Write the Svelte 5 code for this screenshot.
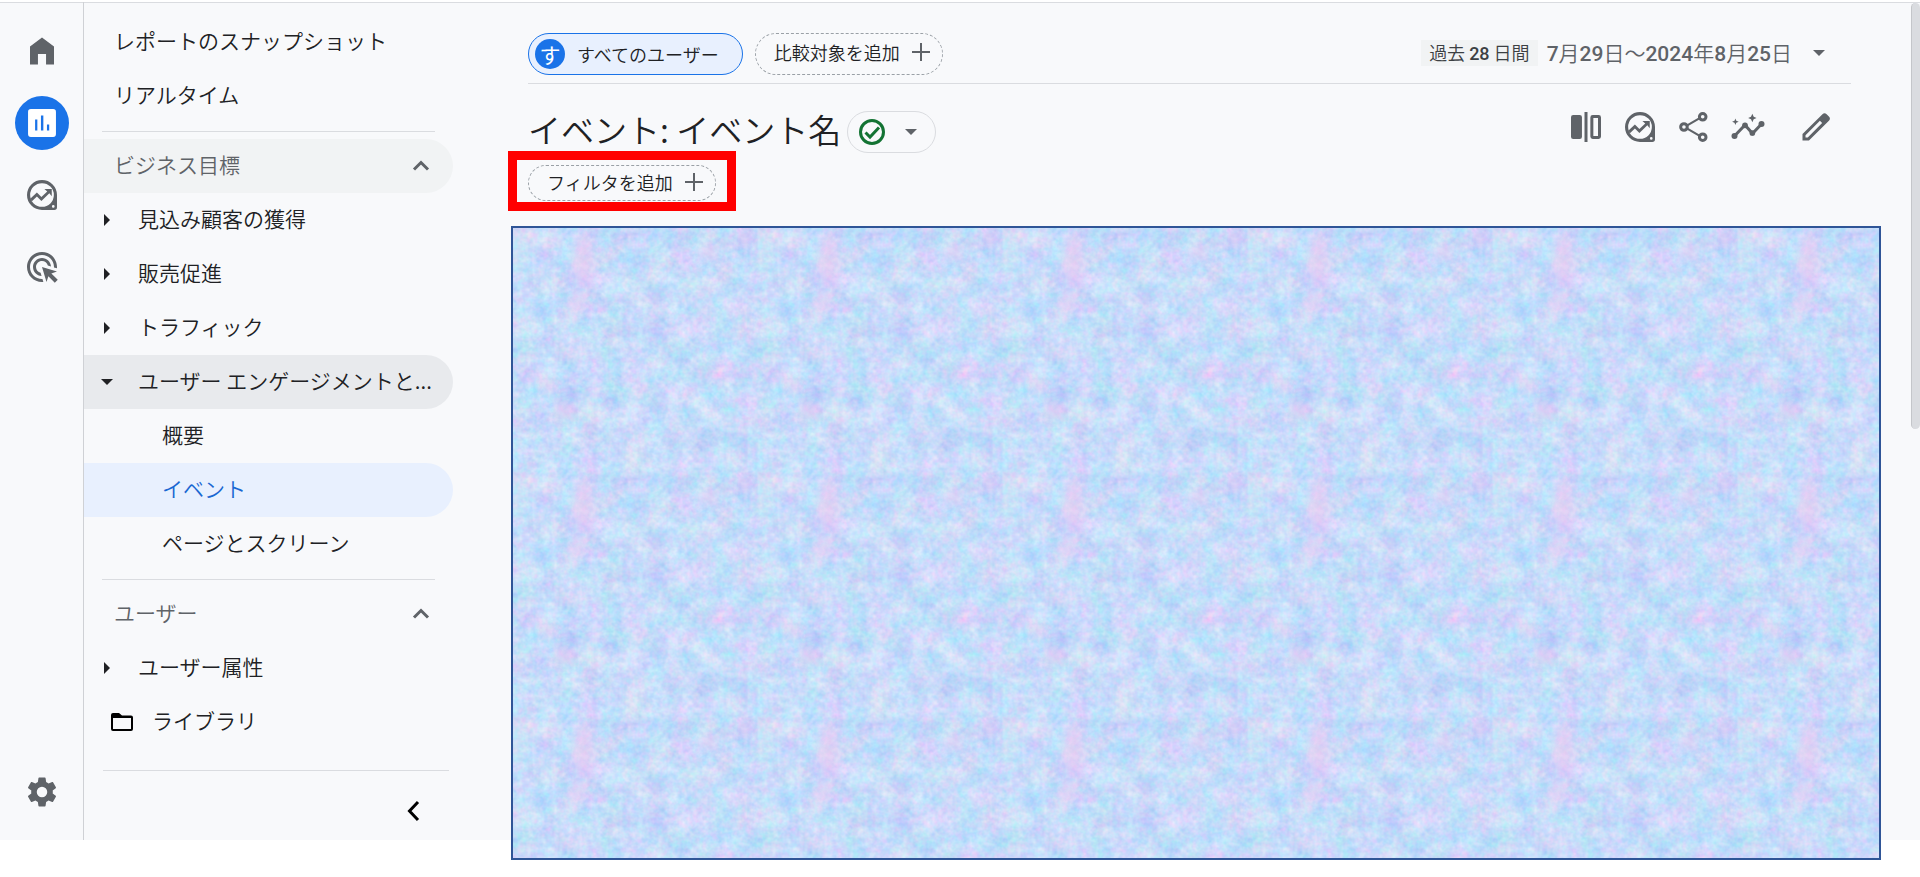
<script>
	const explorePath =
		'M12 2a10 10 0 1 0 0 20h8.2a1.8 1.8 0 0 0 1.8-1.8V12A10 10 0 0 0 12 2zm0 2.1a7.9 7.9 0 1 1 0 15.8 7.9 7.9 0 0 1 0-15.8zm7.5 14.6a.9.9 0 1 1 0 1.8.9.9 0 0 1 0-1.8zM13.6 8l1.9 1.6-3.9 3.7-3-3-4.1 3.9.6 2.2 3.5-3.4 3 3 5.3-5.1 1.6 1.9V8z';

	const rail = [
		{
			label: 'ホーム',
			path: 'M4 21V9l8-6 8 6v12h-5.3v-7H9.3v7z'
		},
		{
			label: 'レポート',
			active: true,
			path: 'M4.600 2.700h14.800a1.900 1.900 0 0 1 1.900 1.900v14.800a1.900 1.900 0 0 1-1.900 1.900H4.600a1.900 1.900 0 0 1-1.900-1.900V4.600a1.900 1.900 0 0 1 1.900-1.900zM7.400 9.700V17h1.500V9.700zM11.300 7v10h1.600V7zM15.300 13v4h1.500v-4z'
		},
		{ label: '探索', path: explorePath },
		{
			label: '広告',
			path: 'M11.710 17.990C8.530 17.840 6 15.220 6 12c0-3.310 2.690-6 6-6 3.220 0 5.840 2.530 5.990 5.710l-2.100-.630C15.480 9.310 13.890 8 12 8c-2.210 0-4 1.790-4 4 0 1.890 1.310 3.480 3.080 3.890zM22 12c0 .300-.010.600-.040.900l-1.970-.590c.010-.100.010-.210.010-.310 0-4.420-3.580-8-8-8s-8 3.580-8 8 3.580 8 8 8c.100 0 .210 0 .310-.010l.590 1.970c-.300.030-.600.040-.900.040C6.480 22 2 17.520 2 12S6.480 2 12 2s10 4.480 10 10zm-3.770 4.260L22 15l-10-3 3 10 1.260-3.770 4.270 4.270 1.980-1.980z'
		}
	];

	const gearPath =
		'M19.140 12.940c.040-.300.060-.610.060-.940 0-.320-.020-.640-.070-.940l2.030-1.580c.180-.140.230-.410.120-.610l-1.920-3.320c-.120-.220-.370-.290-.590-.220l-2.390.960c-.500-.380-1.030-.700-1.620-.940l-.360-2.540c-.040-.240-.240-.410-.480-.410h-3.840c-.240 0-.430.170-.470.410l-.360 2.540c-.590.240-1.130.570-1.620.940l-2.390-.960c-.220-.080-.470 0-.590.220L2.740 8.870c-.120.210-.080.470.120.610l2.030 1.580c-.050.300-.090.630-.090.940s.020.640.070.940l-2.030 1.580c-.180.140-.230.410-.120.610l1.920 3.320c.120.220.370.290.590.220l2.390-.960c.500.380 1.030.700 1.620.940l.360 2.540c.050.240.240.410.480.410h3.840c.240 0 .440-.170.470-.410l.360-2.540c.590-.240 1.130-.560 1.620-.940l2.390.960c.220.080.470 0 .590-.220l1.920-3.320c.120-.220.070-.470-.120-.610zM12 15.500a3.500 3.500 0 1 1 0-7 3.500 3.500 0 0 1 0 7z';

	const groups = [
		{
			title: 'ビジネス目標',
			hover: true,
			items: [
				{ text: '見込み顧客の獲得' },
				{ text: '販売促進' },
				{ text: 'トラフィック' },
				{
					text: 'ユーザー エンゲージメントと...',
					open: true,
					children: [
						{ text: '概要' },
						{ text: 'イベント', active: true },
						{ text: 'ページとスクリーン' }
					]
				}
			]
		},
		{
			title: 'ユーザー',
			items: [{ text: 'ユーザー属性' }]
		}
	];

	// digits are set in a heavier face than the kanji around them
	const split = (str) => str.split(/(\d+)/).filter(Boolean);
	const period = split('過去 28 日間');
	const range = split('7月29日～2024年8月25日');
</script>

{#snippet mixed(parts)}{#each parts as part}{#if /\d/.test(part)}<span class="num">{part}</span>{:else}{part}{/if}{/each}{/snippet}

{#snippet plus()}
	<svg class="plus" viewBox="0 0 30 30"><path d="M15 6v18M6 15h18" /></svg>
{/snippet}

<div class="app">
	<nav class="rail" aria-label="メイン">
		{#each rail as item}
			<a href="#top" class:active={item.active} aria-label={item.label}>
				<svg class="icon" viewBox="0 0 24 24"><path fill-rule="evenodd" d={item.path} /></svg>
			</a>
		{/each}
		<a href="#admin" class="admin" aria-label="管理">
			<svg class="icon" viewBox="0 0 24 24"><path d={gearPath} /></svg>
		</a>
	</nav>

	<nav class="side" aria-label="レポート">
		<a class="row top" href="#snapshot">レポートのスナップショット</a>
		<a class="row top" href="#realtime">リアルタイム</a>

		{#each groups as group}
			<hr />
			<button class="row group" class:hover={group.hover}>
				{group.title}
				<svg class="chevron" viewBox="0 0 18 18"><path d="M2 12.500l7-7 7 7" /></svg>
			</button>
			{#each group.items as item}
				<button class="row item" class:open={item.open}>
					<svg class="caret" viewBox="0 0 12 12">
						<path d={item.open ? 'M0 3h12L6 9z' : 'M3 0v12l6-6z'} />
					</svg>
					{item.text}
				</button>
				{#each item.children ?? [] as child}
					<a class="row child" class:active={child.active} href="#report">{child.text}</a>
				{/each}
			{/each}
		{/each}

		<a class="row library" href="#library">
			<svg viewBox="0 0 24 20">
				<path
					fill-rule="evenodd"
					d="M3 1h6l3 2.500h9a2 2 0 0 1 2 2V17a2 2 0 0 1-2 2H3a2 2 0 0 1-2-2V3a2 2 0 0 1 2-2zm0 5v11h18V6z"
				/>
			</svg>
			ライブラリ
		</a>

		<div class="fold">
			<button aria-label="折りたたむ">
				<svg viewBox="0 0 24 24"><path d="M17 3l-8.500 9 8.500 9" /></svg>
			</button>
		</div>
	</nav>

	<main>
		<header>
			<button class="chip all"><span class="avatar">す</span>すべてのユーザー</button>
			<button class="chip compare">比較対象を追加{@render plus()}</button>
			<button class="date">
				<span class="period">{@render mixed(period)}</span>
				<span class="range">{@render mixed(range)}</span>
				<svg class="caret" viewBox="0 0 12 12"><path d="M0 3h12L6 9z" /></svg>
			</button>
		</header>

		<div class="title">
			<h1>イベント: イベント名</h1>
			<button class="status" aria-label="データの状態">
				<svg class="check" viewBox="0 0 30 30">
					<circle cx="15" cy="15" r="11.500" />
					<path d="M8.500 15.500l4.500 4.500 9-9.500" />
				</svg>
				<svg class="caret" viewBox="0 0 12 12"><path d="M0 3h12L6 9z" /></svg>
			</button>

			<div class="tools">
				<button aria-label="比較">
					<svg class="icon" viewBox="0 0 24 24">
						<rect x="2" y="4" width="7.300" height="16" rx="1.500" />
						<path d="M11 2h2v20h-2z" />
						<rect class="line" x="15.900" y="5" width="5.100" height="14" rx=".600" />
					</svg>
				</button>
				<button aria-label="データ探索">
					<svg class="icon" viewBox="0 0 24 24"><path fill-rule="evenodd" d={explorePath} /></svg>
				</button>
				<button aria-label="共有">
					<svg class="icon" viewBox="0 0 24 24">
						<path class="line thin" d="M7.500 10.900l8.300-4.800M7.500 13.100l8.300 4.800" />
						<circle class="line" cx="5.300" cy="12" r="2.200" />
						<circle class="line" cx="17.800" cy="5.200" r="2.200" />
						<circle class="line" cx="17.800" cy="18.800" r="2.200" />
					</svg>
				</button>
				<button aria-label="インサイト">
					<svg class="icon" viewBox="0 0 24 24">
						<path class="line" d="M3 18l7-7.300 5 5.600 6-6.300" />
						<circle cx="3" cy="18" r="2" />
						<circle cx="10" cy="10.900" r="1.900" />
						<circle cx="14.900" cy="16" r="1.900" />
						<circle cx="21" cy="10" r="2" />
						<path d="M14.900 3.200l.9 1.900 1.900.9-1.900.9-.9 1.900-.9-1.900-1.900-.9 1.900-.9z" />
						<path d="M3.600 6.300l.6 1.600 1.600.6-1.600.6-.6 1.600-.6-1.600-1.600-.6 1.600-.6z" />
					</svg>
				</button>
				<button class="edit" aria-label="編集">
					<svg class="icon" viewBox="0 0 24 24">
						<path
							fill-rule="evenodd"
							d="M3 21v-4.300L16.300 3.500a2 2 0 0 1 2.800 0l1.500 1.500a2 2 0 0 1 0 2.800L7.300 21zM5 19h1.500l9.600-9.600-1.500-1.500L5 17.500z"
						/>
					</svg>
				</button>
			</div>
		</div>

		<div class="filter">
			<button class="chip">フィルタを追加{@render plus()}</button>
			<div class="mark"></div>
		</div>

		<!-- cover over the report body -->
		<svg class="cover">
			<defs>
				<filter id="paper" filterUnits="userSpaceOnUse" x="0" y="0" width="245" height="245" color-interpolation-filters="sRGB">
					<feTurbulence type="fractalNoise" baseFrequency=".045" numOctaves="4" seed="8" stitchTiles="stitch" />
					<feColorMatrix values=".48 0 0 0 .54  0 .3 0 0 .71  0 0 .1 0 .93  0 0 0 0 1" result="wash" />
					<feTurbulence type="fractalNoise" baseFrequency=".2" numOctaves="2" seed="3" stitchTiles="stitch" />
					<feColorMatrix values=".5 0 0 0 .53  0 .3 0 0 .71  0 0 .1 0 .93  0 0 0 0 1" result="grain" />
					<feComposite in="wash" in2="grain" operator="arithmetic" k2=".6" k3=".4" />
				</filter>
				<filter id="soft" x="-50%" y="-50%" width="200%" height="200%">
					<feGaussianBlur stdDeviation="5" />
				</filter>
				<pattern id="tile" width="245" height="245" patternUnits="userSpaceOnUse">
					<rect width="245" height="245" filter="url(#paper)" />
					<g filter="url(#soft)" fill="#f5c4f2" opacity=".5">
						<ellipse cx="70" cy="33" rx="11" ry="27" />
						<circle cx="64" cy="75" r="10" />
						<circle cx="35" cy="158" r="7" />
						<circle cx="52" cy="183" r="10" />
						<circle cx="232" cy="12" r="6" />
						<circle cx="195" cy="25" r="9" />
					</g>
				</pattern>
			</defs>
			<rect width="100%" height="100%" fill="url(#tile)" />
		</svg>
	</main>

	<div class="scroll"></div>
</div>

<style>
	:global(body) {
		background: #fff;
	}

	/* the grey ground stops short of the bottom, the cover runs past it */
	.app {
		--foot: 37px;
		position: relative;
		display: flex;
		box-sizing: border-box;
		min-height: 100vh;
		padding-top: 2px;
		background: linear-gradient(#dadce0 1px, #f8f9fb 1px) 0 2px / 100% calc(100% - 39px) no-repeat;
		color: #202124;
		font-family: 'Noto Sans CJK JP', sans-serif;
		font-size: 21px;
		font-weight: 350;
	}

	button {
		padding: 0;
		border: 0;
		background: none;
		color: inherit;
		font: inherit;
		cursor: pointer;
	}

	a {
		color: inherit;
		text-decoration: none;
	}

	svg {
		display: block;
		flex: none;
	}

	.icon {
		width: 36px;
		height: 36px;
		fill: #5f6368;
	}

	.line {
		fill: none;
		stroke: #5f6368;
		stroke-width: 2;
	}

	.thin {
		stroke-width: 1.5;
	}

	.caret {
		width: 12px;
		height: 12px;
		fill: currentColor;
	}

	.rail {
		display: flex;
		flex-direction: column;
		align-items: center;
		gap: 18px;
		width: 83px;
		flex: none;
		margin-bottom: var(--foot);
		padding: 22px 0 21px;
		box-sizing: border-box;
	}

	.rail a {
		display: grid;
		place-items: center;
		width: 54px;
		height: 54px;
		border-radius: 50%;
	}

	.rail .active {
		background: #1a73e8;
	}

	.rail .active .icon {
		fill: #fff;
	}

	.rail .admin {
		margin-top: auto;
	}

	.side {
		display: flex;
		flex-direction: column;
		width: 369px;
		flex: none;
		margin-bottom: var(--foot);
		padding-top: 13px;
		border-left: 1px solid #cfd1d5;
	}

	.row {
		display: flex;
		align-items: center;
		box-sizing: border-box;
		width: 100%;
		height: 54px;
		padding-bottom: 5px;
		border-radius: 0 27px 27px 0;
		white-space: nowrap;
		text-align: left;
	}

	.row svg {
		margin-top: 5px;
	}

	.top {
		padding-left: 30px;
	}

	.group {
		justify-content: space-between;
		padding-left: 30px;
		padding-right: 23px;
		color: #5f6368;
	}

	.hover {
		background: #f1f3f4;
	}

	.chevron {
		width: 18px;
		height: 18px;
		fill: none;
		stroke: #5f6368;
		stroke-width: 3;
	}

	.item {
		gap: 25px;
		padding-left: 17px;
	}

	.open {
		background: #e8eaed;
	}

	.child {
		padding-left: 78px;
	}

	.child.active {
		background: #e8f0fe;
		color: #1967d2;
	}

	.library {
		gap: 18px;
		padding-left: 26px;
	}

	.library svg {
		width: 24px;
		height: 20px;
	}

	hr {
		width: 333px;
		margin: 8px 0 7px 18px;
		border: 0;
		border-top: 1px solid #dadce0;
	}

	.fold {
		display: flex;
		justify-content: flex-end;
		margin: auto 4px 0 19px;
		padding: 28px 24px 17px;
		border-top: 1px solid #dadce0;
	}

	.fold svg {
		width: 24px;
		height: 24px;
		fill: none;
		stroke: #000;
		stroke-width: 3;
	}

	main {
		display: flex;
		flex: 1;
		flex-direction: column;
		min-width: 0;
		padding: 31px 39px 17px 58px;
	}

	header {
		display: flex;
		align-items: center;
		gap: 12px;
		margin: 0 30px 0 17px;
		padding-bottom: 8px;
		border-bottom: 1px solid #dadce0;
	}

	.chip {
		display: flex;
		align-items: center;
		gap: 6px;
		box-sizing: border-box;
		height: 36px;
		padding: 0 6px 2px 18px;
		border: 1px dashed #9aa0a6;
		border-radius: 21px;
		font-size: 18px;
		white-space: nowrap;
	}

	.compare {
		height: 42px;
		padding-bottom: 4px;
	}

	.all {
		gap: 12px;
		height: 42px;
		padding: 0 23px 0 6px;
		border: 1px solid #1a73e8;
		background: #e8f0fe;
	}

	.avatar {
		width: 30px;
		border-radius: 50%;
		background: #1a73e8;
		color: #fff;
		font-size: 21px;
		font-weight: 400;
		line-height: 30px;
	}

	.plus {
		width: 30px;
		height: 30px;
		stroke: #5f6368;
		stroke-width: 2;
	}

	.date {
		display: flex;
		align-items: center;
		margin-left: auto;
		padding: 0 26px 3px 0;
		color: #5f6368;
		white-space: nowrap;
	}

	.period {
		margin-right: 9px;
		padding: 0 8px;
		background: #f1f3f4;
		color: #3c4043;
		font-size: 18px;
		line-height: 24px;
	}

	.range {
		margin-right: 21px;
		line-height: 30px;
	}

	.num {
		font-family: Roboto, sans-serif;
		font-weight: 500;
	}

	.title {
		display: flex;
		align-items: flex-start;
		margin: 27px 30px 12px 17px;
	}

	h1 {
		margin: 0 6px 0 0;
		font-size: 33px;
		font-weight: 350;
		line-height: 36px;
		white-space: nowrap;
	}

	.status {
		display: flex;
		align-items: center;
		gap: 18px;
		box-sizing: border-box;
		height: 42px;
		padding: 0 18px 0 9px;
		border: 1px solid #dadce0;
		border-radius: 21px;
		color: #5f6368;
	}

	.check {
		width: 30px;
		height: 30px;
		fill: none;
		stroke: #137333;
		stroke-width: 3;
	}

	.tools {
		display: flex;
		gap: 18px;
		margin: -2px 17px 0 auto;
	}

	.edit {
		margin-left: 14px;
	}

	.filter {
		position: relative;
		align-self: flex-start;
		margin: 0 0 25px 17px;
	}

	.mark {
		position: absolute;
		inset: -14px -20px -10px;
		border: 9px solid #f00;
		pointer-events: none;
	}

	.cover {
		flex: 1;
		box-sizing: border-box;
		width: 100%;
		min-height: 300px;
		border: 2px solid #2f5597;
	}

	.scroll {
		position: absolute;
		top: 3px;
		right: 0;
		width: 8px;
		height: calc(50% - 13px);
		border-left: 1px solid #c4c6ca;
		border-radius: 5px;
		background: #dadce0;
	}
</style>
